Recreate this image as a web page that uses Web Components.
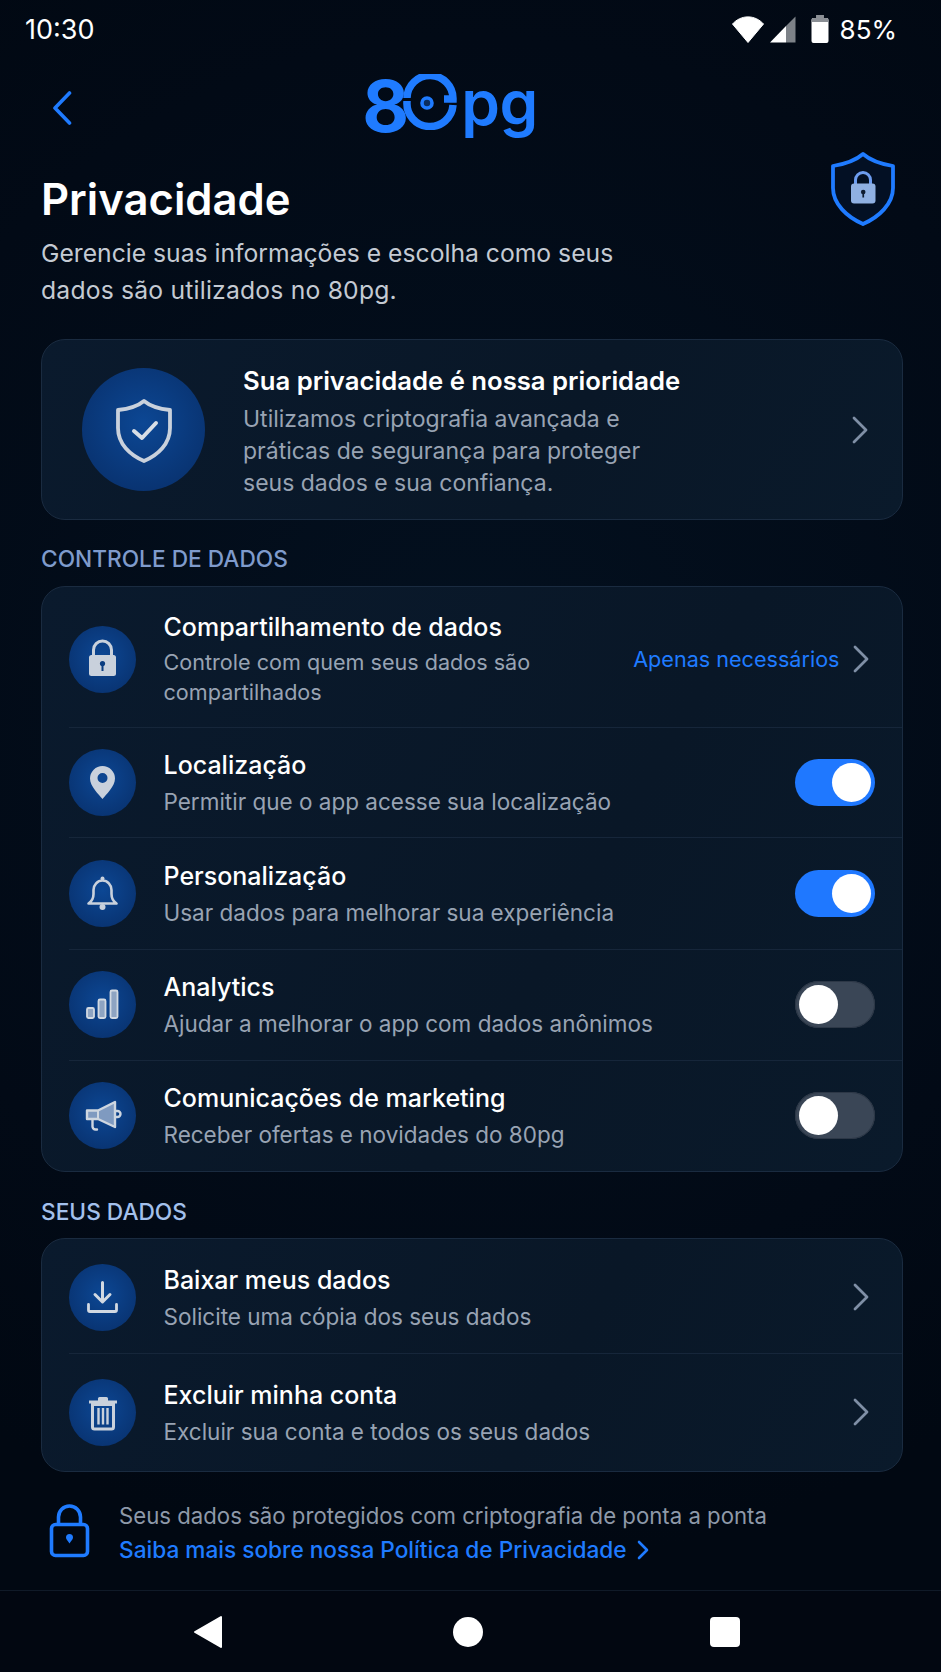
<!doctype html>
<html lang="pt-BR"><head><meta charset="utf-8"><title>Privacidade</title>
<style>
html,body{margin:0;padding:0;background:#020a16}
body{width:941px;height:1672px;overflow:hidden;font-family:Inter,"Noto Sans",sans-serif;color:#fff}
</style></head>
<body>
<privacy-screen>
  <status-bar></status-bar>
  <top-nav></top-nav>
  <page-head></page-head>
  <hero-card></hero-card>
  <section-title style="--mt:26px;--mb:14px">CONTROLE DE DADOS</section-title>
  <settings-card>
    <settings-row icon="lock" title="Compartilhamento de dados" style="--pt:23.5px;--pb:19.5px">
      <span style="display:block;font-size:21.6px;margin:-2px 0 2px">Controle com quem seus dados são<br>compartilhados</span>
      <span slot="end" style="color:#1f7bff;font-size:21.6px;letter-spacing:0">Apenas necessários</span>
      <row-chevron slot="end"></row-chevron>
    </settings-row>
    <settings-row icon="pin" title="Localização" style="--pt:20.5px;--pb:21.5px">Permitir que o app acesse sua localização<toggle-switch slot="end" on></toggle-switch></settings-row>
    <settings-row icon="bell" title="Personalização" style="--pt:21.5px;--pb:22px">Usar dados para melhorar sua experiência<toggle-switch slot="end" on></toggle-switch></settings-row>
    <settings-row icon="bars" title="Analytics" style="--pt:21.5px;--pb:21.5px">Ajudar a melhorar o app com dados anônimos<toggle-switch slot="end"></toggle-switch></settings-row>
    <settings-row icon="mega" title="Comunicações de marketing" last style="--pt:21.5px;--pb:22px">Receber ofertas e novidades do 80pg<toggle-switch slot="end"></toggle-switch></settings-row>
  </settings-card>
  <section-title style="--mt:27px;--mb:13px;color:#a3c0ec">SEUS DADOS</section-title>
  <settings-card>
    <settings-row icon="down" title="Baixar meus dados" style="--pt:24.5px;--pb:22.5px">Solicite uma cópia dos seus dados<row-chevron slot="end"></row-chevron></settings-row>
    <settings-row icon="trash" title="Excluir minha conta" last style="--pt:24.5px;--pb:25.5px">Excluir sua conta e todos os seus dados<row-chevron slot="end"></row-chevron></settings-row>
  </settings-card>
  <secure-note></secure-note>
  <nav-bar></nav-bar>
</privacy-screen>
<script>
const ICONS={
lock:`<path d="M24.5 30v-6a9 9 0 0 1 18 0v6" fill="none" stroke="#c9d1dc" stroke-width="3"/><rect x="20" y="29" width="27" height="21" rx="2.5" fill="#c9d1dc"/><circle cx="33.5" cy="37.5" r="2.6" fill="#0b3d80"/><rect x="32.5" y="38" width="2" height="7" fill="#0b3d80"/>`,
pin:`<path fill-rule="evenodd" fill="#c9d1dc" d="M33.5 17a12.5 12.5 0 0 1 12.5 12.5c0 8-9 16-12.5 20.5C30 45.500 21 37.500 21 29.500A12.500 12.500 0 0 1 33.500 17zM33.500 24a5 5 0 1 0 0 10a5 5 0 0 0 0-10z"/>`,
bell:`<path d="M19.500 43.500c3-2 5-5 5-9.500v-4a9 9.500 0 0 1 18 0v4c0 4.500 2 7.500 5 9.500z" fill="none" stroke="#c9d1dc" stroke-width="2.600" stroke-linejoin="round"/><circle cx="33.500" cy="47" r="3" fill="#c9d1dc"/><circle cx="33.500" cy="18.500" r="2" fill="#c9d1dc"/>`,
bars:`<g fill="#8ea4c2" stroke="#d2d9e2" stroke-width="1.800"><rect x="18" y="37" width="7" height="10" rx="1.500"/><rect x="29.500" y="28.500" width="7" height="18.500" rx="1.500"/><rect x="41.500" y="19.500" width="7" height="27.500" rx="1.500"/></g>`,
mega:`<path d="M18 28.500h11L46 20v25L29 37H18z" fill="#7f9ac0" stroke="#ced6e0" stroke-width="2.400" stroke-linejoin="round"/><path d="M29 29v8M29 37" stroke="#ced6e0" stroke-width="2"/><path d="M46.500 29h2a3 3 0 0 1 0 6h-2" fill="none" stroke="#ced6e0" stroke-width="2.400"/><path d="M23.500 37.500v7a3 3 0 0 0 3 3h1.500" fill="none" stroke="#ced6e0" stroke-width="2.400" stroke-linecap="round"/>`,
down:`<path d="M33.500 18.500v18.500M26 30.500l7.500 7.500 7.500-7.500" fill="none" stroke="#d2d9e2" stroke-width="3" stroke-linecap="round" stroke-linejoin="round"/><path d="M19.500 40.500v5.500a1.500 1.500 0 0 0 1.500 1.500h25a1.500 1.500 0 0 0 1.500-1.500v-5.500" fill="none" stroke="#d2d9e2" stroke-width="2.800" stroke-linecap="round"/>`,
trash:`<path d="M20 23h28" stroke="#c9d1dc" stroke-width="3"/><path d="M29 22v-2.500a1.500 1.500 0 0 1 1.500-1.500h7a1.500 1.500 0 0 1 1.500 1.500V22" fill="#c9d1dc"/><path d="M23.500 25.500h21V48a2 2 0 0 1-2 2h-17a2 2 0 0 1-2-2z" fill="none" stroke="#c9d1dc" stroke-width="3"/><path d="M29.500 29v16.500M34 29v16.500M38.500 29v16.500" stroke="#c9d1dc" stroke-width="2.400"/>`
};
const define=(name,css,html)=>{
  customElements.define(name,class extends HTMLElement{
    constructor(){super();const s=this.attachShadow({mode:'open'});
      s.innerHTML=`<style>${css}</style>`+(typeof html==='function'?html(this):html);}
    connectedCallback(){
      if(typeof html==='function'){this.shadowRoot.innerHTML=`<style>${css}</style>`+html(this);}
    }
  });
};
define('privacy-screen',`:host{display:flex;flex-direction:column;width:941px;height:1672px;
  background:radial-gradient(900px 900px at 50% 40%,#03101f 0,#020a16 70%,#010812 100%);font-family:Inter,"Noto Sans",sans-serif}`,`<slot></slot>`);
define('status-bar',`:host{display:flex;align-items:center;justify-content:space-between;height:58px;padding:0 44px 0 25px;box-sizing:border-box;color:#fff;font-size:26px;flex:none}
.t{font-size:27px}.r{display:flex;align-items:center}svg{display:block}`,
`<span class="t">10:30</span><div class="r">
<svg width="32" height="27" viewBox="0 0 32 27" style="margin-right:6px"><path d="M16 26.500L.500 8C9 -1.500 23 -1.500 31.500 8z" fill="#fff" stroke="#fff" stroke-linejoin="round"/></svg>
<svg width="26" height="27" viewBox="0 0 26 27" style="margin-right:15px"><path d="M0 26.500L16 10V26.500z" fill="#fff"/><path d="M16 10L25.500 .5V26.500H16z" fill="#7d8288"/></svg>
<svg width="18" height="28" viewBox="0 0 18 28" style="margin-right:11px"><path d="M5.500 0h7v3h3a2 2 0 0 1 2 2v21a2 2 0 0 1-2 2h-13a2 2 0 0 1-2-2V5a2 2 0 0 1 2-2h3z" fill="#fff"/><path d="M5.500 0h7v3h3a2 2 0 0 1 2 2v2H.5V5a2 2 0 0 1 2-2h3z" fill="#8b8f95"/></svg>
<span>85%</span></div>`);
define('top-nav',`:host{display:block;position:relative;height:92px;flex:none}
.back{position:absolute;left:52px;top:33px}
.logo{display:flex;justify-content:center;color:#1f7bff;height:92px;font-weight:600;font-family:Inter,sans-serif;padding-right:41px}
.wrap{display:flex;align-items:flex-start}
.e{font-size:72px;line-height:64px;margin-top:16px;font-weight:700;width:42px}
.o{margin-top:16px;margin-left:-1px}
.p{font-size:62px;line-height:60px;margin-top:15px;margin-left:4px;letter-spacing:-.5px;font-weight:600}`,
`<svg class="back" width="20" height="34" viewBox="0 0 20 34"><path d="M17.500 2L3 17l14.500 15" fill="none" stroke="#1f7bff" stroke-width="3.600" stroke-linecap="round" stroke-linejoin="round"/></svg>
<div class="logo"><div class="wrap"><span class="e">8</span>
<svg class="o" width="54" height="56" viewBox="0 0 54 56"><path d="M4 24A23 23 0 0 1 50 25H41" fill="none" stroke="#1f7bff" stroke-width="7.500"/><path d="M50 31A23 23 0 0 1 4 28V27" fill="none" stroke="#1f7bff" stroke-width="7.500"/><circle cx="24" cy="29" r="5" fill="#0a2d5f" stroke="#1f7bff" stroke-width="3.600"/></svg>
<span class="p">pg</span></div></div>`);
define('page-head',`:host{display:flex;justify-content:space-between;align-items:flex-start;padding:0 46px 30.5px 41px;flex:none}
h1{margin:26px 0 10.5px;font-size:43.6px;line-height:48px;font-weight:600;color:#fff}
p{margin:0;font-size:24.7px;line-height:37px;color:#c4cad3}
p span{letter-spacing:.2px}
svg{margin-top:2px;display:block}`,
`<div><h1>Privacidade</h1><p>Gerencie suas informações e escolha como seus<br><span>dados são utilizados no 80pg.</span></p></div>
<svg width="64" height="74" viewBox="0 0 64 74"><path d="M32 2C40 9 50 12 62 14V36C62 52 48 65 32 72C16 65 2 52 2 36V14C14 12 24 9 32 2z" fill="#031024" stroke="#1f7bff" stroke-width="3.800" stroke-linejoin="round"/><path d="M24.500 32v-4a7.500 7.500 0 0 1 15 0v4" fill="none" stroke="#6d9df0" stroke-width="3"/><rect x="20" y="31.500" width="24.500" height="20" rx="3" fill="#8fb0e2"/><circle cx="32.200" cy="40" r="2.300" fill="#0d1b30"/><rect x="31.400" y="40" width="1.700" height="5.500" fill="#0d1b30"/></svg>`);
define('row-chevron',`:host{display:block;width:16px;height:28px;flex:none;margin-left:13px;margin-right:6px}svg{display:block}`,
`<svg width="16" height="28" viewBox="0 0 16 28"><path d="M2 2l12 12L2 26" fill="none" stroke="#7f8fa6" stroke-width="2.800" stroke-linecap="round" stroke-linejoin="round"/></svg>`);
const CARD=`background:linear-gradient(120deg,#0a1a2d,#091727 60%,#0a1a2b);border:1.500px solid #1a2b40;border-radius:24px;box-sizing:border-box;`;
define('hero-card',`:host{display:flex;align-items:center;${CARD}height:181px;margin:0 38px 0 41px;flex:none;padding:0 28px 0 40px}
.c{width:123px;height:123px;border-radius:50%;background:radial-gradient(circle at 50% 45%,#0c4794,#082f6a 90%);flex:none}
.t{flex:1;margin-left:38px;padding-top:3px;font-size:23px;line-height:32px;color:#98a3b3}
b{display:block;font-size:25.7px;line-height:36px;font-weight:600;color:#fff;margin-bottom:4px}svg{display:block}`,
`<div class="c"><svg width="123" height="123" viewBox="0 0 123 123"><path d="M62 33c6 5 16 8 26 9v18c0 16-12 27-26 33c-14-6-26-17-26-33V42c10-1 20-4 26-9z" fill="none" stroke="#c9d1dc" stroke-width="3.800" stroke-linejoin="round"/><path d="M52 63l8 7 14-15" fill="none" stroke="#d8dee6" stroke-width="4" stroke-linecap="round" stroke-linejoin="round"/></svg></div>
<div class="t"><b>Sua privacidade é nossa prioridade</b>Utilizamos criptografia avançada e<br>práticas de segurança para proteger<br>seus dados e sua confiança.</div>
<row-chevron></row-chevron>`);
define('section-title',`:host{display:block;margin:var(--mt) 38px var(--mb) 41px;font-size:22.7px;line-height:26px;font-weight:500;color:#7f9bcc;flex:none}`,`<slot></slot>`);
define('settings-card',`:host{display:block;${CARD}margin:0 38px 0 41px;flex:none;overflow:hidden}`,`<slot></slot>`);
define('settings-row',`:host{display:block;padding-left:26.500px}
.r{display:flex;align-items:center;padding:var(--pt) 27.500px var(--pb) 0;border-bottom:1.500px solid #16263a}
:host([last]) .r{border-bottom:0}
.c{width:67px;height:67px;border-radius:50%;background:radial-gradient(circle at 50% 45%,#0c4794,#082f6a 95%);flex:none;margin-right:28px}
.c svg{display:block}
.t{flex:1;font-size:22.5px;line-height:30px;color:#98a3b3;margin-bottom:-1px}
b{display:block;font-size:25px;line-height:32px;font-weight:500;color:#fff;margin-bottom:6px}
.e{display:flex;align-items:center}`,
h=>`<div class="r"><div class="c"><svg width="67" height="67" viewBox="0 0 67 67">${ICONS[h.getAttribute('icon')]||''}</svg></div>
<div class="t"><b>${h.getAttribute('title')||''}</b><slot></slot></div><div class="e"><slot name="end"></slot></div></div>`);
define('toggle-switch',`:host{display:block;position:relative;width:80px;height:47px;border-radius:24px;background:#3a4656;flex:none;box-shadow:inset 0 0 0 1px #2c3746}
:host([on]){background:#1f78ff;box-shadow:none}
i{position:absolute;left:4px;top:4px;width:39px;height:39px;border-radius:50%;background:#fff}
:host([on]) i{left:37px}`,`<i></i>`);
define('secure-note',`:host{display:flex;align-items:flex-start;margin:26.500px 38px 0 49px;flex:none;font-size:22.2px;line-height:34px;color:#8e99a9}
svg{display:block;flex:none}
.t{margin-left:29px}
a{display:inline-flex;align-items:center;color:#1f7bff;font-weight:500;text-decoration:none;font-size:22.65px;letter-spacing:0}
a svg{margin-left:10px}`,
`<svg width="41" height="54" viewBox="0 0 41 54" style="margin-top:5px"><path d="M9.500 21v-8a11 11 0 0 1 22 0v8" fill="none" stroke="#1f7bff" stroke-width="3.600"/><rect x="2.500" y="20.500" width="36" height="31" rx="4" fill="none" stroke="#1f7bff" stroke-width="3.600"/><path d="M20.500 30a3.500 3.500 0 0 1 3.500 3.500c0 2-2 3.500-3.500 6c-1.500-2.500-3.500-4-3.500-6a3.500 3.500 0 0 1 3.500-3.500z" fill="#1f7bff"/></svg>
<div class="t">Seus dados são protegidos com criptografia de ponta a ponta<br><a>Saiba mais sobre nossa Política de Privacidade<svg width="12" height="20" viewBox="0 0 12 20"><path d="M2 2l8 8-8 8" fill="none" stroke="#1f7bff" stroke-width="2.600" stroke-linecap="round" stroke-linejoin="round"/></svg></a></div>`);
define('nav-bar',`:host{display:flex;align-items:center;height:82px;margin-top:auto;border-top:1.500px solid #101a28;background:#020711;box-sizing:border-box;flex:none;padding:0 201px 0 193px;justify-content:space-between}
svg{display:block}i{display:block;width:30px;height:30px;border-radius:50%;background:#fff;margin-left:3px}b{display:block;width:30px;height:30px;border-radius:4px;background:#fff}`,
`<svg width="30" height="34" viewBox="0 0 30 34"><path d="M28 2v30L2 17z" fill="#fff" stroke="#fff" stroke-width="2" stroke-linejoin="round"/></svg><i></i><b></b>`);
</script>
</body></html>
